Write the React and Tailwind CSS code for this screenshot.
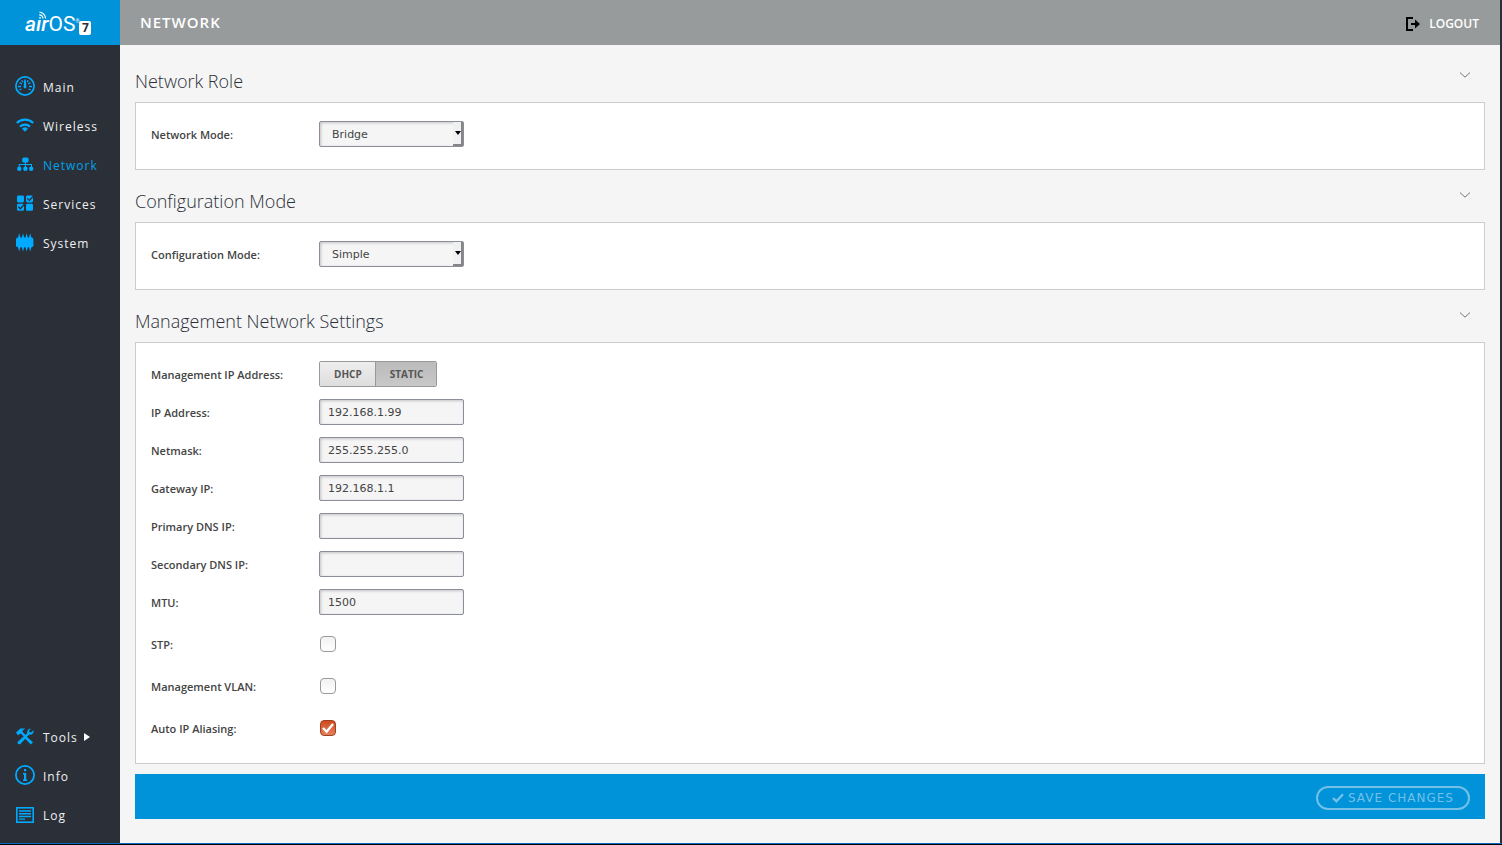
import React, { useState } from "react";

const Icon = ({ children, className = "size-5" }) => (
  <svg viewBox="0 0 20 20" className={className + " shrink-0"} fill="currentColor" aria-hidden="true">
    {children}
  </svg>
);

const GaugeIcon = () => (
  <Icon>
    <g fill="none" stroke="currentColor">
      <circle cx="10" cy="10" r="9.1" strokeWidth="1.7" />
      <path strokeWidth="1.3" d="M3 10.5h3M14 10.5h3M4.6 6.6l2.2 1.4M15.4 6.6L13.2 8M6.8 4.2l1 2M13.2 4.2l-1 2M4.4 14l2-1M15.6 14l-2-1" />
    </g>
    <path d="M9.3 3.5h1.4l.7 7.5a1.4 1.4 0 1 1-2.8 0z" />
  </Icon>
);

const WifiIcon = () => (
  <Icon>
    <g fill="none" stroke="currentColor" strokeWidth="2.2">
      <path d="M1.8 8a11.8 11.8 0 0 1 16.4 0" />
      <path d="M5 11.6a7.2 7.2 0 0 1 10 0" />
    </g>
    <path d="M7 13.7a4.4 4.4 0 0 1 6 0L10 16.8z" />
  </Icon>
);

const NetworkIcon = () => (
  <Icon>
    <rect x="7.2" y="3.4" width="6.4" height="5.2" rx="1.6" />
    <path d="M9.9 8h1v2H17v3h-1v-2h-5.1v2h-1v-2H4.7v2h-1v-3h6.2z" />
    <circle cx="4.3" cy="14.8" r="2.2" />
    <circle cx="10.4" cy="14.8" r="2.2" />
    <circle cx="16.2" cy="14.8" r="2.2" />
  </Icon>
);

const ServicesIcon = () => (
  <Icon>
    <rect x="2" y="2.5" width="7" height="7" rx="1.4" />
    <rect x="11" y="2.5" width="7" height="7" rx="1.4" />
    <rect x="2" y="10.8" width="7" height="7" rx="1.4" />
    <rect x="11" y="10.8" width="7" height="7" rx="1.4" />
    <g fill="none" stroke="#2b2f38" strokeWidth="1.3">
      <path d="M12.3 5.4l2 2 4-4.2" />
      <path d="M3.3 13.7l2 2 4-4.2" />
    </g>
  </Icon>
);

const ChipIcon = () => (
  <Icon>
    <rect x="1" y="5.6" width="17.4" height="9.6" rx="1.8" />
    <path d="M4.200 1.200L5.600 6.200H2.800zM8 1.200l1.400 5H6.600zM11.600 1.200l1.400 5h-2.800zM15.200 1.200l1.400 5h-2.800zM4.200 19.600l-1.400-5h2.800zM8 19.600l-1.400-5h2.800zM11.600 19.600l-1.400-5h2.800zM15.200 19.600l-1.400-5h2.800z" />
  </Icon>
);

const ToolsIcon = () => (
  <Icon>
    <path d="M1 6.6L5.4 2.4h4.8L7.4 4.8l.4 1.4 3 3-1.7 1.7-3-3.1-1.2-.1-2 1.5z" />
    <path d="M11.4 10.6l6.6 5.6-2.2 2.3-6-6.3z" />
    <path d="M3 15.5l9.3-8.2C11.7 5 13 2.6 16 2.4l-2 2.3.4 1.4 1.5.4 2.7-2.3c.5 3-1.7 4.900-4.400 4.400L5.600 17.800c-1.800 1.500-4-.6-2.600-2.300z" />
  </Icon>
);

const InfoIcon = () => (
  <Icon>
    <circle cx="10" cy="10" r="9.1" fill="none" stroke="currentColor" strokeWidth="1.8" />
    <path d="M9 4h2.200v2.300H9zM8 8h3.200v6.600h1V16H8v-1.400h1V9.400H8z" />
  </Icon>
);

const LogIcon = () => (
  <Icon>
    <rect x="1.8" y="3.800" width="16.4" height="14.4" fill="none" stroke="currentColor" strokeWidth="1.6" />
    <path d="M4 6.200h12v1.500H4zM4 9h12v1.500H4zM4 11.800h12v1.500H4zM4 14.500h6v1.300H4z" />
  </Icon>
);

const NavItem = ({ icon, label, active, arrow }) => (
  <li>
    <a href="#" aria-current={active ? "page" : undefined} className="flex h-[39px] items-center gap-2 pl-[15px]">
      <span className="pb-0.5 text-[#00aaff]">{icon}</span>
      <span className={active ? "pt-0.5 text-[12px] tracking-[1px] text-[#00a2e8]" : "pt-0.5 text-[12px] tracking-[1px] text-[#f0f0f0]"}>
        {label}
      </span>
      {arrow && (
        <svg viewBox="0 0 6 8" className="-ml-0.5 h-2 w-1.5 fill-white" aria-hidden="true">
          <path d="M0 0l6 4-6 4z" />
        </svg>
      )}
    </a>
  </li>
);

const Logo = () => (
  <a
    href="#"
    className="relative flex h-[45px] items-center bg-[#0093d9] pt-0.5 pl-[25px] font-['Roboto',sans-serif] leading-7 text-white"
  >
    <span className="text-[21px] font-medium italic">aır</span>
    <span className="text-[21px]">OS</span>
    <sup className="text-[5px] leading-none">®</sup>
    <span className="mt-2 flex h-3.5 w-3 items-center justify-center rounded-xs bg-white font-['Open_Sans',sans-serif] text-[12px] font-bold text-[#2b2f38]">
      7
    </span>
    <svg viewBox="0 0 9 9" className="absolute top-[11px] left-[38px] size-[9px]" fill="none" stroke="#fff" aria-hidden="true">
      <path d="M1.500 1.200a6.500 6.500 0 0 1 6 6.300" strokeWidth="1.200" />
      <path d="M1.200 3.800a4 4 0 0 1 3.800 3.700" strokeWidth="1.200" />
      <circle cx="2" cy="6.800" r=".9" fill="#fff" stroke="none" />
    </svg>
  </a>
);

const Section = ({ title, children }) => (
  <section>
    <div className="flex h-[52px] items-center justify-between pt-[11px] pr-[15px]">
      <h2 className="text-[18px] font-light text-[#2b2f38]">{title}</h2>
      <button type="button" aria-label={"Collapse " + title} className="mb-3.5 text-[#777]">
        <svg viewBox="0 0 10 6" className="h-1.5 w-2.5" fill="none" stroke="currentColor" aria-hidden="true">
          <path d="M0 .5l5 4.700L10 .5" />
        </svg>
      </button>
    </div>
    <div className="border border-[#ccc] bg-white px-[15px] pt-[18px] pb-2.5">{children}</div>
  </section>
);

const labelClass = "w-[168px] shrink-0 pt-0.5 text-[11px] font-semibold text-[#444]";
const fieldClass =
  "h-[26px] w-[145px] rounded-xs border border-[#8b8e9b] bg-[#f5f5f5] font-['DejaVu_Sans',sans-serif] text-[11px] text-[#444] shadow-[inset_1px_1px_3px_rgba(0,0,0,0.2)]";

const TextRow = ({ id, label, value }) => (
  <div className="mb-3 flex h-[26px] items-center">
    <label htmlFor={id} className={labelClass}>{label}</label>
    <input id={id} type="text" defaultValue={value} className={fieldClass + " px-2"} />
  </div>
);

const SelectRow = ({ id, label, options }) => (
  <div className="mb-3 flex h-[26px] items-center">
    <label htmlFor={id} className={labelClass}>{label}</label>
    <div className="relative">
      <select id={id} className={fieldClass + " block appearance-none pt-0.5 pr-4 pl-3"}>
        {options.map((o) => <option key={o}>{o}</option>)}
      </select>
      <span className="pointer-events-none absolute top-px right-px flex h-6 w-2.5 items-center justify-end border-r-2 border-b-2 border-[#858585] bg-[#f0f0f0]">
        <svg viewBox="0 0 6 4" className="h-1 w-1.5 shrink-0" aria-hidden="true">
          <path d="M0 0h6L3 4z" />
        </svg>
      </span>
    </div>
  </div>
);

const CheckRow = ({ id, label, checked }) => (
  <div className="mb-2 flex h-[34px] items-center">
    <label htmlFor={id} className={labelClass}>{label}</label>
    <span className="relative ml-px size-4">
      <input
        id={id}
        type="checkbox"
        defaultChecked={checked}
        className="peer block size-4 appearance-none rounded-sm border border-[#999] bg-linear-to-b from-[#f2f2f2] to-white checked:border-[#a04020] checked:from-[#cf4a1c] checked:to-[#e5805a]"
      />
      <svg viewBox="0 0 16 16" className="pointer-events-none absolute inset-0 hidden size-4 peer-checked:block" fill="none" stroke="#fff" strokeWidth="2.4" aria-hidden="true">
        <path d="M3 8l3.600 3.800L13 4" />
      </svg>
    </span>
  </div>
);

export default function App() {
  const [mode, setMode] = useState("STATIC");
  return (
    <div className="flex min-h-screen flex-col border-b border-black bg-[#f5f5f5] font-['Open_Sans',sans-serif]">
      <div className="flex grow border-b border-[#0a6cc0]">
        <aside className="flex w-[120px] shrink-0 flex-col bg-[#2b2f38] pb-[9px]">
          <Logo />
          <nav aria-label="Primary" className="flex grow flex-col justify-between pt-[22px]">
            <ul>
              <NavItem icon={<GaugeIcon />} label="Main" />
              <NavItem icon={<WifiIcon />} label="Wireless" />
              <NavItem icon={<NetworkIcon />} label="Network" active />
              <NavItem icon={<ServicesIcon />} label="Services" />
              <NavItem icon={<ChipIcon />} label="System" />
            </ul>
            <ul>
              <NavItem icon={<ToolsIcon />} label="Tools" arrow />
              <NavItem icon={<InfoIcon />} label="Info" />
              <NavItem icon={<LogIcon />} label="Log" />
            </ul>
          </nav>
        </aside>
        <div className="min-w-0 grow border-r-2 border-[#2b2f3c]">
          <header className="flex h-[45px] items-center justify-between bg-[#979b9c] pr-[21px] pl-5 text-white">
            <h1 className="text-[15px] font-semibold tracking-[1px]">NETWORK</h1>
            <button type="button" className="flex items-center gap-2 pt-0.5 text-[12px] font-semibold">
              <svg viewBox="0 0 16 16" className="size-4" fill="#000" aria-hidden="true">
                <path d="M1 1h7v2H3v10h5v2H1zM6 7h4V3.600L15 8l-5 4.400V9H6z" />
              </svg>
              LOGOUT
            </button>
          </header>
          <main className="px-[15px] pt-[5px]">
            <form onSubmit={(e) => e.preventDefault()}>
              <Section title="Network Role">
                <SelectRow id="network-mode" label="Network Mode:" options={["Bridge", "Router"]} />
              </Section>
              <Section title="Configuration Mode">
                <SelectRow id="config-mode" label="Configuration Mode:" options={["Simple", "Advanced"]} />
              </Section>
              <Section title="Management Network Settings">
                <div className="mb-3 flex h-[26px] items-center" role="group" aria-labelledby="mgmt-ip">
                  <span id="mgmt-ip" className={labelClass}>Management IP Address:</span>
                  <div className="flex h-[26px] overflow-hidden rounded-xs border border-[#999] text-[10px] font-bold text-[#555]">
                    {["DHCP", "STATIC"].map((m) => (
                      <button
                        key={m}
                        type="button"
                        aria-pressed={mode === m}
                        onClick={() => setMode(m)}
                        className="bg-linear-to-b from-[#eee] to-[#ddd] pr-[13px] pl-3.5 not-first:border-l not-first:border-[#999] aria-pressed:from-[#bbb] aria-pressed:to-[#c8c8c8]"
                      >
                        {m}
                      </button>
                    ))}
                  </div>
                </div>
                <TextRow id="ip" label="IP Address:" value="192.168.1.99" />
                <TextRow id="netmask" label="Netmask:" value="255.255.255.0" />
                <TextRow id="gateway" label="Gateway IP:" value="192.168.1.1" />
                <TextRow id="dns1" label="Primary DNS IP:" value="" />
                <TextRow id="dns2" label="Secondary DNS IP:" value="" />
                <TextRow id="mtu" label="MTU:" value="1500" />
                <CheckRow id="stp" label="STP:" />
                <CheckRow id="vlan" label="Management VLAN:" />
                <CheckRow id="aliasing" label="Auto IP Aliasing:" checked />
              </Section>
              <div className="mt-2.5 flex h-[45px] items-center justify-end bg-[#0093d9] pt-0.5 pr-[15px]">
                <button type="submit" className="flex h-6 items-center gap-1 rounded-full border-2 border-[#73c0e8] px-3.5 font-['DejaVu_Sans',sans-serif] text-[12px] tracking-[1px] text-[#73c0e8]">
                  <svg viewBox="0 0 12 10" className="h-2.5 w-3" fill="none" stroke="currentColor" strokeWidth="2.4" aria-hidden="true">
                    <path d="M1 5l3.400 3.200L11 1.200" />
                  </svg>
                  SAVE CHANGES
                </button>
              </div>
            </form>
          </main>
        </div>
      </div>
    </div>
  );
}
